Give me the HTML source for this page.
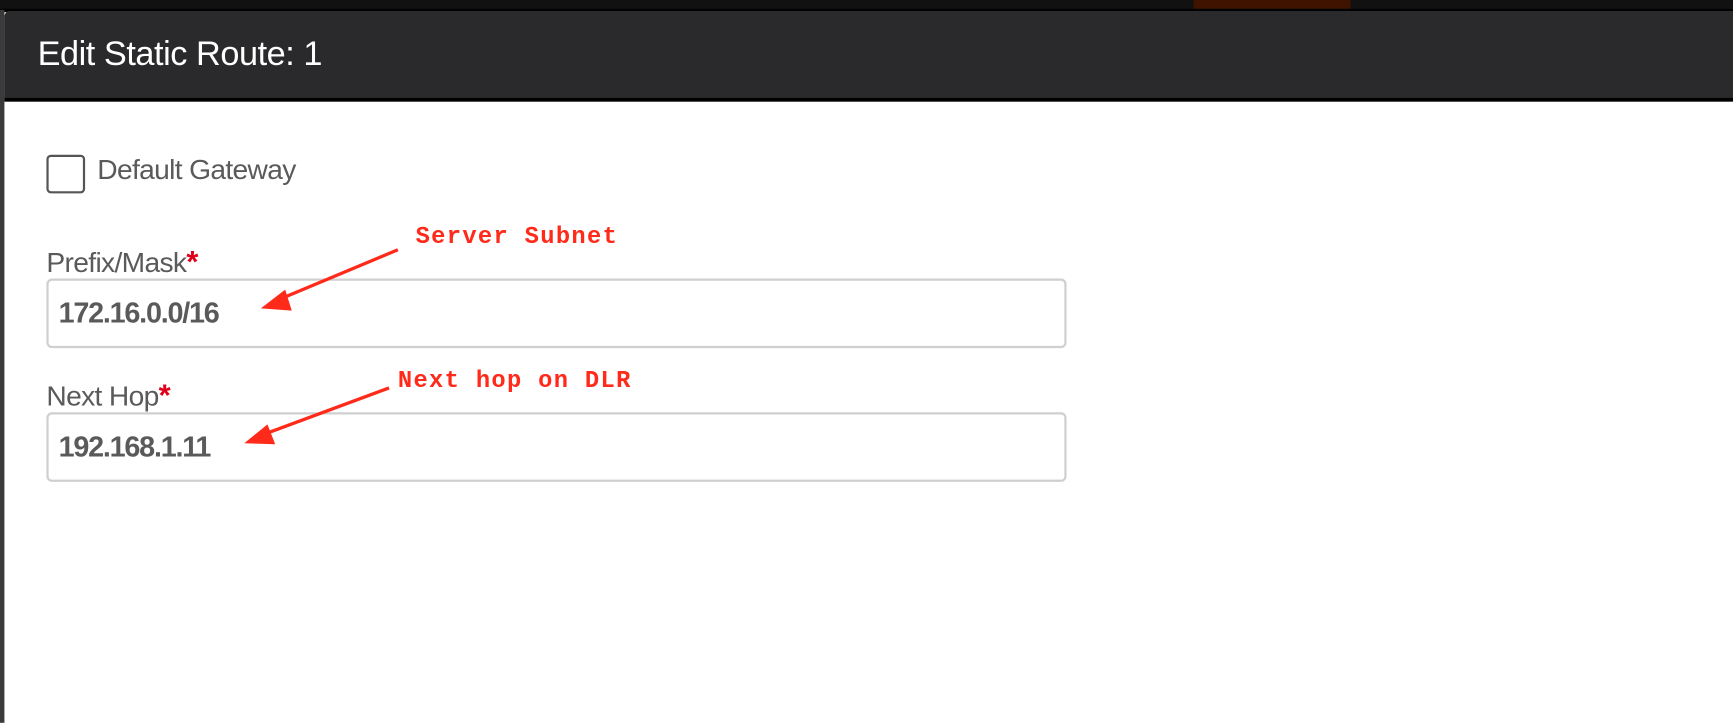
<!DOCTYPE html>
<html><head><meta charset="utf-8"><style>
*{margin:0;padding:0;box-sizing:border-box}
body{width:1733px;height:654px;position:relative;overflow:hidden;background:#fff;font-family:"Liberation Sans",sans-serif}
#w{position:absolute;left:0;top:0;width:1568px;height:592px;transform:scale(1.10523);transform-origin:0 0}
.abs{position:absolute}
.lbl{color:#5a5a5a;font-size:25.5px;letter-spacing:-0.6px}
.star{color:#e0001a;font-weight:bold;font-size:28px}
.inp{border:2px solid #cfcfcf;border-radius:5px;background:#fff}
.val{color:#5a5a5a;font-size:26px;font-weight:bold;letter-spacing:-1.1px}
.ann{color:#ff2a1a;font-family:"Liberation Mono",monospace;font-weight:bold;font-size:21.5px;letter-spacing:1.2px}
</style></head><body><div id="w">
<div class="abs" style="left:0;top:0;width:1568px;height:9px;background:#111"></div>
<div class="abs" style="left:1080px;top:0;width:142px;height:8px;background:#3f1300"></div>
<div class="abs" style="left:0;top:8px;width:1568px;height:3px;background:#000"></div>
<div class="abs" style="left:0;top:9px;width:4px;height:645px;background:#3a3a3a"></div>
<div class="abs" style="left:4px;top:10px;width:1729px;height:78px;background:#2a2a2c;border-top-left-radius:5px"></div>
<div class="abs" style="left:4px;top:88px;width:1729px;height:4px;background:#000"></div>
<div class="abs" style="left:34px;top:31px;color:#fff;font-size:31px;letter-spacing:-0.4px">Edit Static Route: 1</div>
<div class="abs" style="left:42px;top:140px;width:35px;height:35px;border:2px solid #555;border-radius:4px"></div>
<div class="abs lbl" style="left:88px;top:140px">Default Gateway</div>
<div class="abs lbl" style="left:42px;top:221px">Prefix/Mask<span class="star">*</span></div>
<div class="abs inp" style="left:42px;top:252px;width:923px;height:63px"></div>
<div class="abs val" style="left:53px;top:268px">172.16.0.0/16</div>
<div class="abs lbl" style="left:42px;top:342px">Next Hop<span class="star">*</span></div>
<div class="abs inp" style="left:42px;top:373px;width:923px;height:63px"></div>
<div class="abs val" style="left:53px;top:389px">192.168.1.11</div>
<div class="abs ann" style="left:376px;top:203px">Server Subnet</div>
<div class="abs ann" style="left:360px;top:333px">Next hop on DLR</div>
<svg class="abs" style="left:0;top:0" width="1568" height="592">
<line x1="360" y1="226" x2="250" y2="272" stroke="#ff2a1a" stroke-width="3"/>
<polygon points="236,279 258,262 264,281" fill="#ff2a1a"/>
<line x1="352" y1="351" x2="236" y2="394" stroke="#ff2a1a" stroke-width="3"/>
<polygon points="221,401 242,384 249,402" fill="#ff2a1a"/>
</svg>
</div></body></html>
